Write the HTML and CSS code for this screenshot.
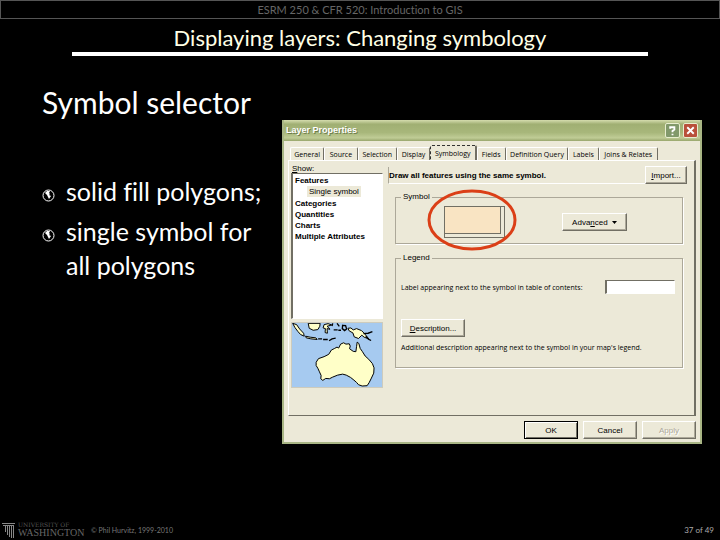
FILE: index.html
```html
<!DOCTYPE html>
<html lang="en">
<head>
<meta charset="utf-8">
<title>Displaying layers: Changing symbology</title>
<link rel="stylesheet" href="styles.css">
</head>
<body>
<header class="course">ESRM 250 &amp; CFR 520: Introduction to GIS</header>
<h1 class="title">Displaying layers: Changing symbology</h1>
<main class="content">
  <section class="notes">
    <h2 class="heading">Symbol selector</h2>
    <ul class="points">
      <li class="point"><svg class="globe" viewBox="0 0 13 13" aria-hidden="true"><circle cx="6.500" cy="6.500" r="5.500"/><path d="M5 2h3l-1 2 1 1-1 1 2 1-2 3-1-2-1-2-2-2z"/></svg><span>solid fill polygons;</span></li>
      <li class="point"><svg class="globe" viewBox="0 0 13 13" aria-hidden="true"><circle cx="6.500" cy="6.500" r="5.500"/><path d="M5 2h3l-1 2 1 1-1 1 2 1-2 3-1-2-1-2-2-2z"/></svg><span>single symbol for all polygons</span></li>
    </ul>
  </section>
  <section class="dialog" aria-labelledby="dialog-title">
    <div class="titlebar">
      <h3 class="dialog-title" id="dialog-title">Layer Properties</h3>
      <button class="sys help" aria-label="Help"><svg viewBox="0 0 14 14"><path d="M4.500 5V3.500H9V6L7 7.500V9M7 10.500V12"/></svg></button>
      <button class="sys close" aria-label="Close"><svg viewBox="0 0 14 14"><path d="M3.500 3.500l7 7M10.500 3.500l-7 7"/></svg></button>
    </div>
    <div class="dialog-body">
      <div class="tabs" role="tablist">
        <button class="tab" role="tab">General</button>
        <button class="tab" role="tab">Source</button>
        <button class="tab" role="tab">Selection</button>
        <button class="tab" role="tab">Display</button>
        <button class="tab selected" role="tab" aria-selected="true">Symbology</button>
        <button class="tab" role="tab">Fields</button>
        <button class="tab" role="tab">Definition Query</button>
        <button class="tab" role="tab">Labels</button>
        <button class="tab" role="tab">Joins &amp; Relates</button>
      </div>
      <div class="page" role="tabpanel">
        <div class="side">
          <div class="show"><u>S</u>how:</div>
          <ul class="tree">
            <li>Features
              <ul class="branch"><li><span class="picked">Single symbol</span></li></ul>
            </li>
            <li>Categories</li>
            <li>Quantities</li>
            <li>Charts</li>
            <li>Multiple Attributes</li>
          </ul>
          <svg class="map" viewBox="34 247 272 194" preserveAspectRatio="none" role="img" aria-label="Map of Australia">
            <g class="land">
              <path d="M107 366L114 355 131 349 145 342 153 329 163 324 170 320 175 323 181 311 190 307 197 311 207 310 210 317 208 325 219 333 227 334 229 319 231 305 236 309 240 324 247 334 255 347 266 357 277 370 282 383 281 399 274 414 267 428 261 437 246 438 235 434 229 427 221 420 211 412 198 405 187 402 172 405 157 411 147 416 136 415 127 421 121 416 122 406 117 395 112 384 107 376z"/>
              <path d="M36 248L48 252 57 265 69 278 71 287 60 282 52 273 43 261z"/>
              <path d="M83 248L86 263 98 269 112 267 118 257 119 248z"/>
              <path d="M203 263L212 262 219 268 229 264 244 270 253 279 266 295 252 290 245 284 235 294 222 289 218 277 207 271z"/>
              <path d="M131 252L143 249 154 253 140 257 149 266 140 264 141 278 134 276 135 264 128 262z"/>
              <path d="M75 287L89 290 106 292 110 297 91 295 77 292z"/>
            </g>
            <path class="isles" d="M113 295h12M128 297h14M146 301l9-6 11-2M160 268h12M174 269h8M157 248l-2 8M170 248l7 9M187 254l9 1 3 10-6 5-7-6zM250 279l14-1 13-5M257 287l8 9 8 4"/>
          </svg>
        </div>
        <div class="settings">
          <div class="intro">
            <strong class="intro-text">Draw all features using the same symbol.</strong>
            <button class="button import"><u>I</u>mport...</button>
          </div>
          <fieldset class="group symbol-group">
            <legend>Symbol</legend>
            <div class="swatch-wrap">
              <button class="swatch" aria-label="Symbol"></button>
              <svg class="ring" viewBox="0 0 90 62" aria-hidden="true"><ellipse cx="45" cy="31" rx="43" ry="29"/></svg>
            </div>
            <button class="button advanced">Adva<u>n</u>ced <svg class="caret" viewBox="0 0 5 3" aria-hidden="true"><path d="M0 0h5L2.500 3z"/></svg></button>
          </fieldset>
          <fieldset class="group legend-group">
            <legend>Legend</legend>
            <div class="field">
              <label for="toc">Label appearing next to the symbol in table of contents:</label>
              <input class="box" id="toc" type="text">
            </div>
            <button class="button description"><u>D</u>escription...</button>
            <p class="hint">Additional description appearing next to the symbol in your map's legend.</p>
          </fieldset>
        </div>
      </div>
      <div class="actions">
        <button class="button action default">OK</button>
        <button class="button action">Cancel</button>
        <button class="button action" disabled>Apply</button>
      </div>
    </div>
  </section>
</main>
<footer class="footer">
  <div class="brand">
    <svg class="column" viewBox="0 0 13 17" aria-hidden="true"><path d="M0 1.500h13M1 3.500h11M3.500 4v6M5.500 4v9M7.500 4v11M9.500 4v12M11.500 4v12"/></svg>
    <div class="wordmark"><span class="over">UNIVERSITY OF</span><span class="name">WASHINGTON</span></div>
  </div>
  <span class="credit">© Phil Hurvitz, 1999-2010</span>
  <span class="count">37 of 49</span>
</footer>
</body>
</html>
```
FILE: styles.css
```css
* { box-sizing: border-box; }
body {
  margin: 0;
  min-height: 100vh;
  display: flex;
  flex-direction: column;
  background: #000;
  color: #fff;
  font-family: Lato, "Liberation Sans", sans-serif;
  font-variant-ligatures: none;
}
h1, h2, h3, p, ul { margin: 0; padding: 0; font-weight: 400; }
ul { list-style: none; }
button, input { font: inherit; color: inherit; margin: 0; padding: 0; }

.course {
  height: 19px;
  border: 1px solid #555;
  color: #666;
  font-size: 11px;
  line-height: 17px;
  text-align: center;
}
.title {
  margin: 0 10%;
  height: 37px;
  border-bottom: 4px solid #fff;
  color: #ffffe6;
  font-size: 22px;
  line-height: 37px;
  text-align: center;
}
.content {
  flex: 1;
  display: grid;
  grid-template-columns: 240px 1fr;
  align-items: start;
  padding: 0 18px 0 42px;
}
.heading { margin-top: 28px; font-size: 30px; line-height: 36px; }
.points { margin-top: 54px; display: grid; gap: 6px; }
.point {
  display: grid;
  grid-template-columns: 14px 1fr;
  column-gap: 10px;
  padding-right: 15px;
  font-size: 25px;
  line-height: 34px;
}
.globe { width: 13px; height: 13px; margin-top: 15px; fill: #fff; }
.globe circle { fill: none; stroke: #fff; }

.dialog {
  margin-top: 64px;
  border: 2px solid #a9b685;
  border-top: 0;
  background: #ece9d8;
  color: #000;
  font-family: "Liberation Sans", sans-serif;
  font-size: 8px;
  line-height: 11px;
}
.titlebar {
  display: flex;
  align-items: center;
  gap: 3px;
  height: 21px;
  padding: 0 2px;
  background: linear-gradient(#d5dcae, #a0af73 20%, #a8b77b 60%, #c0cc96 85%, #98a66c);
}
.dialog-title {
  flex: 1;
  color: #fff;
  font-size: 9px;
  font-weight: 700;
  text-shadow: 1px 1px #6e7c4b;
}
.sys {
  width: 15px;
  height: 15px;
  border: 1px solid #e8edcf;
  border-radius: 2px;
  background: #82996b;
}
.sys svg { display: block; width: 13px; height: 13px; fill: none; stroke: #fff; stroke-width: 2; }
.close { background: #b9503a; }

.dialog-body { padding: 4px 4px 3px; }
.tabs {
  display: grid;
  grid-template-columns: 34fr 33fr 39fr 33fr 46fr 29fr 62fr 30fr 59fr;
  align-items: end;
  height: 15px;
  padding: 0 38px 0 2px;
}
.tab {
  height: 13px;
  border: 1px solid #fff;
  border-right-color: #716f64;
  border-bottom: 0;
  border-radius: 2px 2px 0 0;
  background: #ece9d8;
  font-family: "Open Sans", "Liberation Sans", sans-serif;
  font-size: 7px;
  white-space: nowrap;
}
.selected { height: 15px; border: 1px dashed #333; border-right: 2px solid #716f64; border-bottom: 0; }
.page {
  display: grid;
  grid-template-columns: 92px 1fr;
  column-gap: 5px;
  padding: 5px 7px 27px 2px;
  border: 1px solid #fff;
  border-right: 2px solid #716f64;
  border-bottom-color: #716f64;
}
.show { height: 7px; padding-left: 1px; line-height: 5px; }
.tree {
  height: 146px;
  padding: 1px 2px;
  border: 1px solid #fff;
  border-top-color: #716f64;
  border-left: 2px solid #716f64;
  background: #fff;
  font-weight: 700;
}
.branch { padding-left: 12px; font-weight: 400; }
.tree li { line-height: 11px; }
.tree .branch li { line-height: 12px; }
.picked { display: inline-block; padding: 0 2px; background: #ece9d8; line-height: 11px; }
.map { display: block; width: 100%; height: 66px; margin-top: 3px; background: #a6caf0; border: 1px solid #cdcbbd; }
.land { fill: #ffffc8; stroke: #000; stroke-width: 3; stroke-linejoin: round; }
.isles { fill: none; stroke: #000; stroke-width: 4; }

.intro { display: flex; height: 18px; align-items: center; }
.intro-text {
  flex: 1;
  height: 17px;
  border-left: 1px solid #aca899;
  border-bottom: 1px solid #fff;
  line-height: 17px;
  white-space: nowrap;
}
.button {
  height: 18px;
  border: 1px solid #fff;
  border-right-color: #716f64;
  border-bottom-color: #716f64;
  background: #ece9d8;
  box-shadow: inset -1px -1px #aca899;
}
.import { width: 42px; }
.group {
  min-width: 0;
  margin: 0 4px 0 7px;
  padding: 0 5px;
  border: 1px solid #aca899;
  box-shadow: 1px 1px #fff;
}
.group legend { padding: 0 2px; height: 8px; line-height: 8px; }
.symbol-group {
  display: flex;
  justify-content: space-between;
  align-items: center;
  height: 51px;
  margin-top: 9px;
}
.swatch-wrap { position: relative; width: 61px; height: 32px; margin-left: 43px; }
.swatch { width: 100%; height: 100%; border: 1px solid #716f64; background: #f9e4c3; box-shadow: inset -3px -3px #ece9d8, inset -4px -4px #716f64; }
.ring { position: absolute; left: -17px; top: -17px; width: 90px; height: 62px; fill: none; stroke: #db3f17; stroke-width: 3; pointer-events: none; }
.advanced { width: 65px; margin-right: 50px; }
.caret { width: 5px; height: 3px; margin-left: 2px; vertical-align: middle; }
.legend-group { height: 114px; margin-top: 10px; }
.field, .hint { font-family: "Open Sans", "Liberation Sans", sans-serif; font-size: 7px; white-space: nowrap; }
.field { display: flex; align-items: center; justify-content: space-between; margin-top: 18px; padding-right: 2px; }
.box { width: 70px; height: 14px; border: 1px solid #fff; border-left: 2px solid #716f64; border-top-color: #716f64; background: #fff; }
.description { width: 64px; margin-top: 25px; }
.hint { margin-top: 5px; }
.actions { display: flex; justify-content: flex-end; gap: 5px; padding-top: 5px; }
.action { width: 54px; }
.default { border: 1px solid #000; box-shadow: inset 1px 1px #fff, inset -1px -1px #716f64; }
.action:disabled { color: #aca899; text-shadow: 1px 1px #fff; }

.footer { display: flex; align-items: center; height: 20px; padding: 0 6px 0 2px; color: #777; }
.brand { display: flex; gap: 3px; width: 89px; }
.column { width: 13px; height: 17px; fill: none; stroke: #888; }
.wordmark { display: flex; flex-direction: column; color: #666; white-space: nowrap; }
.over { font: 6px/6px "DejaVu Serif", serif; color: #555; }
.name { font: 10px/10px "Liberation Serif", serif; }
.credit { flex: 1; font-size: 7px; }
.count { font-size: 8px; color: #aaa; }
```
